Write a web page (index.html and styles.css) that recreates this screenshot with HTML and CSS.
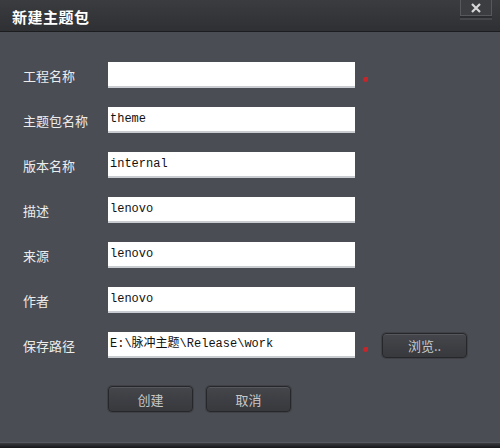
FILE: index.html
```html
<!DOCTYPE html>
<html>
<head>
<meta charset="utf-8">
<link rel="stylesheet" href="styles.css">
</head>
<body>
<div class="dialog">
  <div class="titlebar">
    <span class="title">新建主题包</span>
    <span class="close">
      <svg width="12" height="10" viewBox="0 0 12 10"><path d="M2 1 L10 9 M10 1 L2 9" stroke="#d8d8d8" stroke-width="2.2" fill="none"/></svg>
    </span>
  </div>
  <div class="content">
    <div class="row"><label class="lbl">工程名称</label><div class="field"></div><span class="req"></span></div>
    <div class="row"><label class="lbl">主题包名称</label><div class="field">theme</div></div>
    <div class="row"><label class="lbl">版本名称</label><div class="field">internal</div></div>
    <div class="row"><label class="lbl">描述</label><div class="field">lenovo</div></div>
    <div class="row"><label class="lbl">来源</label><div class="field">lenovo</div></div>
    <div class="row"><label class="lbl">作者</label><div class="field">lenovo</div></div>
    <div class="row"><label class="lbl">保存路径</label><div class="field">E:\脉冲主题\Release\work</div><span class="req"></span><button class="btn browse">浏览..</button></div>
    <div class="actions"><button class="btn">创建</button><button class="btn">取消</button></div>
  </div>
  <div class="footer"></div>
</div>
</body>
</html>
```
FILE: styles.css
```css
html, body { margin: 0; padding: 0; }
body { background: #4a4d54; font-family: "Noto Sans CJK SC", "Noto Sans", sans-serif; }
.dialog { width: 500px; height: 448px; display: flex; flex-direction: column; background: #4a4d54; }
.titlebar {
  height: 31px; flex: none; display: flex; align-items: flex-start;
  background: linear-gradient(#3a3c40, #2e3033);
  border-bottom: 1px solid #1c1d1f;
  padding-left: 12px; box-sizing: content-box;
}
.title { color: #fff; font-size: 15px; font-weight: bold; line-height: 33px; letter-spacing: 0.5px; }
.close {
  margin-left: auto; margin-right: 8px; width: 30px; height: 15px;
  border: 1px solid #56585c; border-top: none; background: #3b3d41;
  display: flex; align-items: center; justify-content: center;
  box-shadow: 0 2px 0 #2a2c2f, 0 4px 0 #45474b;
}
.content { flex: 1; padding-top: 30px; display: flex; flex-direction: column; gap: 19px; }
.row { display: flex; align-items: center; height: 26px; }
.lbl { width: 85px; padding-left: 23px; flex: none; color: #ececec; font-size: 13px; }
.field {
  width: 247px; height: 26px; box-sizing: border-box; background: #fff; flex: none;
  border-bottom: 2px solid #c9ccd0;
  font-family: "Liberation Mono", "Noto Sans CJK SC", monospace; font-size: 12px; color: #111;
  line-height: 24px; padding-left: 2px; white-space: nowrap; overflow: hidden;
}
.req { width: 5px; height: 5px; background: #c4262a; border-radius: 50% 0 50% 50%; margin-left: 8px; align-self: flex-end; margin-bottom: 6px; flex: none; }
.btn {
  width: 85px; height: 26px; box-sizing: border-box; padding: 0;
  background: linear-gradient(#44464b, #37393d);
  border: 1px solid #26272a; border-radius: 4px;
  box-shadow: inset 0 1px 0 #55575c, 0 0 0 1px #3f4146;
  color: #c8c8c8; font-family: "Noto Sans CJK SC", sans-serif; font-size: 13px;
}
.browse { margin-left: 14px; height: 25px; }
.actions { display: flex; gap: 13px; padding-left: 108px; margin-top: 9px; }
.footer { height: 5px; flex: none; border-top: 1px solid #56595f; background: linear-gradient(#3a3c40, #151618); }
```
